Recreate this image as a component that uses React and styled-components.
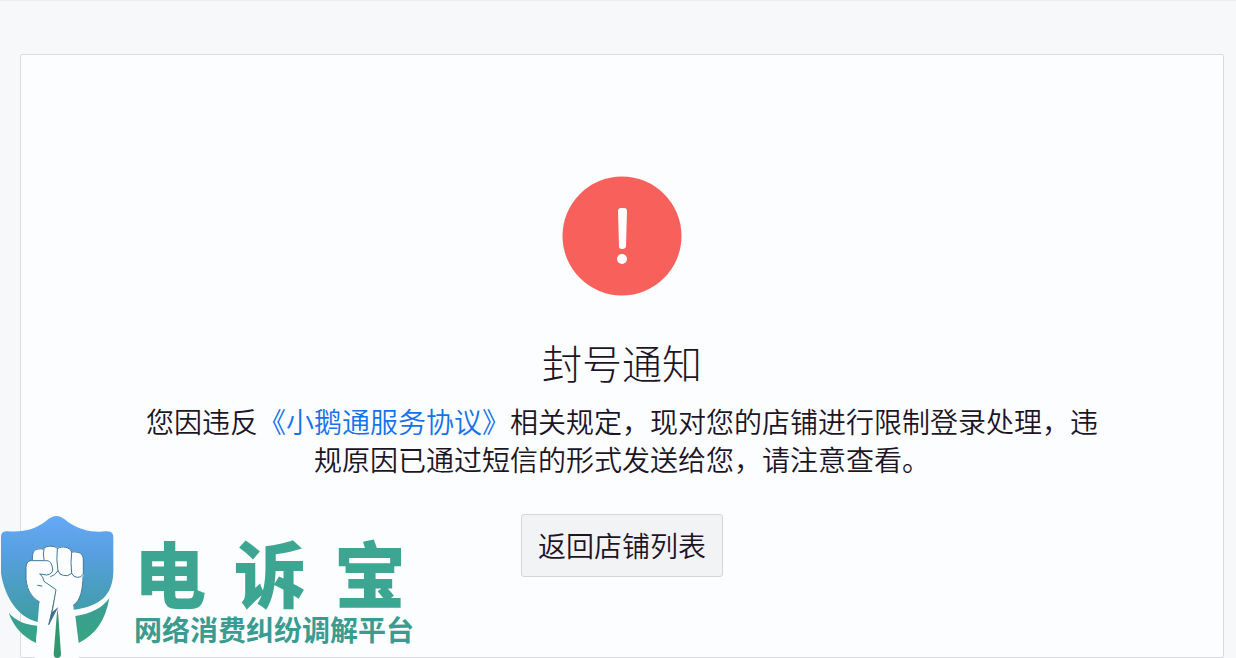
import React from "react";
import styled, { createGlobalStyle } from "styled-components";

const GlobalStyle = createGlobalStyle`
  * {
    box-sizing: border-box;
  }

  body {
    margin: 0;
    background-color: #f7f8fa;
    color: #1c1526;
    font-family: "Noto Sans CJK SC", "Noto Sans", sans-serif;
    font-weight: 350;
  }
`;

const Page = styled.div`
  position: relative;
  display: flex;
  min-height: 100vh;
  padding: 53px 12px 0 20px;
  border-top: 1px solid #eceef1;
`;

const Panel = styled.main`
  flex: 1;
  display: flex;
  flex-direction: column;
  align-items: center;
  padding: 121px 120px 60px;
  background-color: #fcfdff;
  border: 1px solid #d9dbe0;
  border-radius: 2px;
`;

const AlertIcon = styled.svg`
  width: 120px;
  height: 120px;
`;

const Title = styled.h1`
  margin: 34px 0 8px;
  font-size: 40px;
  line-height: 64px;
  font-weight: 300;
`;

const Message = styled.p`
  max-width: 960px;
  margin: 0;
  font-size: 28px;
  line-height: 38px;
  text-align: center;
`;

const Link = styled.a`
  color: #1472ec;
  text-decoration: none;
`;

const Button = styled.button`
  height: 63px;
  margin-top: 36px;
  padding: 0 16px 2px;
  cursor: pointer;
  border: 1px solid #d3d5d8;
  border-radius: 3px;
  background-color: #f2f3f5;
  color: inherit;
  font-family: inherit;
  font-size: 28px;
  font-weight: 350;
`;

const Watermark = styled.div`
  position: absolute;
  left: 0;
  bottom: 0;
  display: flex;
  align-items: flex-end;
  gap: 20px;
  color: #3da693;
`;

const Shield = styled.svg`
  width: 114px;
  height: 142px;
`;

const Brand = styled.div`
  display: flex;
  flex-direction: column;
  padding-bottom: 9px;
`;

const BrandName = styled.div`
  display: flex;
  gap: 28px;
  font-size: 72px;
  line-height: 76px;
  font-weight: 900;
`;

const Slogan = styled.div`
  color: #3a9c90;
  font-size: 28px;
  line-height: 40px;
  font-weight: 700;
`;

const ShieldLogo = () => (
  <Shield viewBox="0 18 342 426" aria-hidden="true">
    <defs>
      <linearGradient id="shield" x1="0" y1="0" x2="0" y2="1">
        <stop offset="0" stopColor="#65a9f6" />
        <stop offset="0.35" stopColor="#589fe0" />
        <stop offset="1" stopColor="#3d9da0" />
      </linearGradient>
      <linearGradient id="base" x1="0" y1="0" x2="0" y2="1">
        <stop offset="0" stopColor="#3b9d98" />
        <stop offset="1" stopColor="#37a580" />
      </linearGradient>
    </defs>
    <path
      fill="url(#shield)"
      d="M170 18C182 18 192 26 203 35C240 60 275 68 318 64Q340 61 340 82V185C338 255 302 288 222 299L112 336C54 322 14 262 3 190V82Q2 61 24 64C75 67 105 58 137 34C148 24 158 18 170 18Z"
    />
    <path fill="url(#base)" d="M26 308C48 333 78 345 113 347L108 399C68 380 39 347 26 308Z" />
    <path fill="url(#base)" d="M328 265C316 332 287 374 236 399L226 318C272 312 305 295 328 265Z" />
    <path
      fill="#fcfdff"
      d="M97 150C96 118 104 114 130 116C135 106 165 106 172 114C185 107 208 110 215 125C240 122 250 132 250 150V200C248 235 244 270 220 286L236 444H104L118 276C92 262 78 235 78 205V170Q80 153 97 150Z"
    />
    <g fill="none" stroke="#3f7898" strokeWidth="3" strokeLinecap="round" strokeLinejoin="round">
      <path d="M97 150C97 120 103 115 130 117C138 105 168 107 172 116C186 107 210 111 215 126C240 124 250 132 250 150V192Q243 204 232 202Q220 201 215 190Q204 201 190 196Q178 195 174 182Q166 196 152 200" />
      <path d="M132 116Q128 132 132 149" />
      <path d="M172 116Q168 148 174 184" />
      <path d="M215 126Q211 158 215 190" />
      <path d="M90 152H136C151 151 155 160 158 177Q159 192 140 195L120 192" />
      <path d="M90 152Q78 156 78 172V208C82 244 96 262 118 276" />
      <path d="M120 192Q130 200 132 214L168 239L158 296L146 344L172 294" />
      <path d="M249 200C248 235 244 270 220 286" />
      <path d="M113 226L126 228" />
    </g>
    <path fill="#3f6f92" d="M168 239L156 307L171 294L146 346L157 292Z" />
    <path fill="#32976f" d="M172 294L175 318L183 432Q183 444 172 444Q161 444 161 432Z" />
  </Shield>
);

const App = () => {
  return (
    <>
      <GlobalStyle />
      <Page>
        <Panel>
          <AlertIcon viewBox="0 0 120 120" role="img" aria-label="警告">
            <circle cx="60" cy="60" r="59.5" fill="#f8605c" />
            <path
              fill="#fff"
              d="M56 35Q56 32 59 32H62Q65 32 65 35L64 70Q64 73 60 73Q57 73 57 70Z"
            />
            <circle cx="60" cy="83" r="5" fill="#fff" />
          </AlertIcon>
          <Title>封号通知</Title>
          <Message>
            您因违反<Link href="#agreement">《小鹅通服务协议》</Link>
            相关规定，现对您的店铺进行限制登录处理，违规原因已通过短信的形式发送给您，请注意查看。
          </Message>
          <Button type="button">返回店铺列表</Button>
        </Panel>
        <Watermark>
          <ShieldLogo />
          <Brand>
            <BrandName>
              <span>电</span>
              <span>诉</span>
              <span>宝</span>
            </BrandName>
            <Slogan>网络消费纠纷调解平台</Slogan>
          </Brand>
        </Watermark>
      </Page>
    </>
  );
};

export default App;
